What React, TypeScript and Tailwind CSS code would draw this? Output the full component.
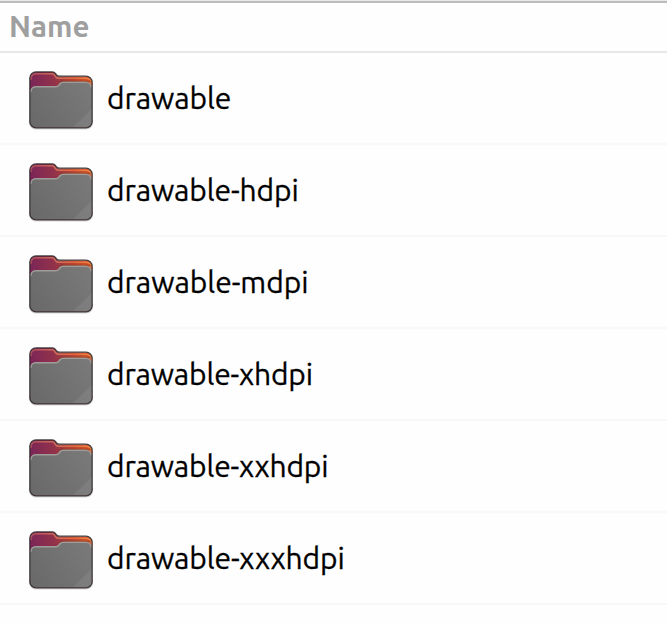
const folders = [
  { name: "drawable", tracking: "tracking-[-0.1px]" },
  { name: "drawable-hdpi", tracking: "tracking-[-0.12px]" },
  { name: "drawable-mdpi", tracking: "tracking-[-0.03px]" },
  { name: "drawable-xhdpi", tracking: "tracking-[-0.17px]" },
  { name: "drawable-xxhdpi", tracking: "tracking-[-0.17px]" },
  { name: "drawable-xxxhdpi", tracking: "tracking-[-0.13px]" },
];

function FolderIcon() {
  return (
    <svg width="74" height="66" viewBox="24 65 74 66" fill="none" className="shrink-0">
      <defs>
        <linearGradient id="back" x1="30" y1="86" x2="92" y2="76" gradientUnits="userSpaceOnUse">
          <stop offset="0" stopColor="#7b2558" />
          <stop offset="0.4" stopColor="#92324a" />
          <stop offset="0.55" stopColor="#a83c3a" />
          <stop offset="1" stopColor="#dc5a22" />
        </linearGradient>
        <linearGradient id="rim" x1="30" y1="0" x2="92" y2="0" gradientUnits="userSpaceOnUse">
          <stop offset="0" stopColor="#b04f5c" />
          <stop offset="0.45" stopColor="#cf6f5c" />
          <stop offset="0.7" stopColor="#e2663c" />
          <stop offset="1" stopColor="#f08a50" />
        </linearGradient>
        <linearGradient id="front" x1="32" y1="126" x2="91" y2="84" gradientUnits="userSpaceOnUse">
          <stop offset="0" stopColor="#696969" />
          <stop offset="1" stopColor="#7a7a7a" />
        </linearGradient>
        <clipPath id="body">
          <path d="M30 78a6 6 0 0 1 6-6H52.500q1.500 0 2.500 1.200l1.500 2q1 1.200 3 1.200H86a6 6 0 0 1 6 6V121.500a6 6 0 0 1-6 6H36a6 6 0 0 1-6-6z" />
        </clipPath>
      </defs>
      <path d="M29 120v3a6.500 6.500 0 0 0 6.500 6.500h51a6.500 6.500 0 0 0 6.500-6.500v-3z" fill="#000" opacity=".17" />
      <g clipPath="url(#body)">
        <path d="M29 71h64v58H29z" fill="url(#back)" />
        <path d="M30.900 80v-1a5 5 0 0 1 5-5.200h16.300q1.300 0 2.300 1.400l1.300 1.800q.9 1.200 3 1.200H86a5.200 5.200 0 0 1 5.200 5" stroke="url(#rim)" strokeWidth="1.500" />
        <path d="M60 81.200H92" stroke="#7c351f" strokeOpacity=".6" strokeWidth="1" />
        <path d="M30 94v-2a6 6 0 0 1 6-6H56q1.500 0 2.500-1.300l1.300-1.700q1-1.300 3-1.300H86a6 6 0 0 1 6 6V129H30z" fill="url(#front)" />
        <path d="M93 108v21H71z" fill="#fff" opacity=".07" />
        <path d="M30.900 92v-.5a5 5 0 0 1 5-4.800H56q1.800 0 2.800-1.300l1.300-1.700q1-1.300 3-1.300H86a5.200 5.200 0 0 1 5.200 5" stroke="#a09c9a" strokeWidth="1.400" />
      </g>
      <path d="M29.800 78a6.200 6.200 0 0 1 6.200-6.200H52.500q1.600 0 2.600 1.300l1.500 1.900q1 1.200 3 1.200H86a6.200 6.200 0 0 1 6.200 6.200V121.700a6.200 6.200 0 0 1-6.200 6.200H36a6.200 6.200 0 0 1-6.200-6.200z" stroke="#292324" strokeOpacity=".85" strokeWidth="1.300" />
    </svg>
  );
}

export default function App() {
  return (
    <main className="h-[624px] w-full overflow-hidden bg-[#fefefe] font-['Ubuntu','Noto_Sans',sans-serif]">
      <div className="h-px bg-[#e9e9e9]" />
      <header className="flex h-[52px] items-center border-y-2 border-t-[#bcbcbc] border-b-[#e8e8e8] pl-[9px] text-[29.5px] leading-none font-bold text-[#9f9f9f]">
        <span>Name</span>
      </header>
      <ul>
        {folders.map(({ name, tracking }) => (
          <li key={name} className="flex h-[92px] items-center border-b-2 border-[#f8f8f8] pl-6">
            <FolderIcon />
            <span className={`ml-[9px] text-[30px] leading-none text-black [-webkit-text-stroke:0.3px_black] ${tracking}`}>{name}</span>
          </li>
        ))}
      </ul>
    </main>
  );
}
